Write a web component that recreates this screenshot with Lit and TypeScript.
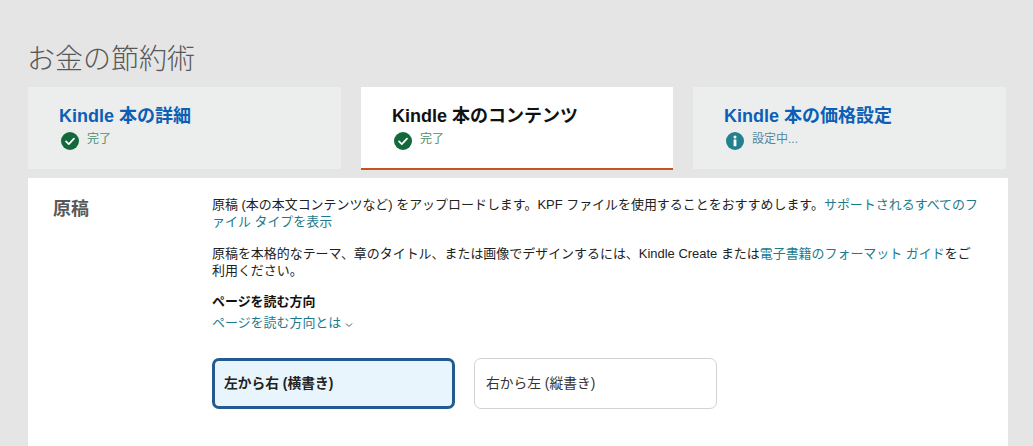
import { LitElement, html, css, svg } from "lit";
import { customElement } from "lit/decorators.js";

const check = svg`<circle cx="9" cy="9" r="9" fill="#14693c"/><path d="M5 9.4l2.8 2.7L13 6.6" fill="none" stroke="#fff" stroke-width="1.7" stroke-linecap="round" stroke-linejoin="round"/>`;
const info = svg`<circle cx="9" cy="9" r="9" fill="#23808f"/><circle cx="9" cy="4.9" r="1.5" fill="#fff"/><rect x="7.6" y="7.4" width="2.8" height="6.8" rx=".4" fill="#fff"/>`;

@customElement("app-root")
export class AppRoot extends LitElement {
  static styles = css`
    :host {
      display: block;
      width: 1033px;
      height: 446px;
      overflow: hidden;
      background: #e5e5e5;
      font-family: "Liberation Sans", "Noto Sans CJK JP", sans-serif;
      color: #111;
    }
    .page { padding: 40px 25px 0 28px; }
    h1 {
      margin: 0 0 0 -1px;
      font-size: 28px;
      line-height: 39px;
      height: 47px;
      font-weight: 300;
      color: #565959;
    }
    .tabs { display: flex; gap: 20px; height: 83px; }
    .tab {
      flex: none;
      width: 313px;
      height: 82px;
      box-sizing: border-box;
      background: #eceeee;
      padding: 17px 0 0 31px;
    }
    .tab.mid { width: 312px; height: 83px; background: #fff; border-bottom: 2px solid #c7511f; }
    .tab-title { font-size: 18px; line-height: 24px; font-weight: 700; color: #0c5fb5; }
    .mid .tab-title { color: #111; }
    .status { display: flex; align-items: center; gap: 8px; margin: 4px 0 0 2px; font-size: 12px; line-height: 18px; color: #4c8f6d; }
    .status.info { color: #55879f; }
    .status span { position: relative; top: -2px; }
    .status svg { width: 18px; height: 18px; flex: none; }
    .panel {
      margin-top: 8px;
      width: 980px;
      height: 268px;
      background: #fff;
      display: flex;
      box-sizing: border-box;
      padding: 18px 0 0 25px;
    }
    .label { width: 159px; flex: none; font-size: 18px; line-height: 26px; font-weight: 700; color: #565959; }
    .body { width: 768px; font-size: 12.96px; line-height: 17px; color: #222; line-break: loose; }
    p { margin: 0 0 14px; }
    p:first-child { margin-bottom: 15px; }
    a { color: #1d7a8c; text-decoration: none; }
    .sub { font-weight: 700; color: #111; line-height: 17px; }
    .more { display: flex; align-items: center; gap: 4px; line-height: 18px; margin-top: 4px; }
    .more svg { width: 8px; height: 6px; margin-top: 3px; }
    .choices { display: flex; gap: 19px; margin-top: 26px; }
    .choice {
      width: 243px;
      height: 51px;
      box-sizing: border-box;
      border: 1px solid #d0d2d4;
      border-radius: 7px;
      display: flex;
      align-items: center;
      padding-left: 11px;
      font-size: 13.75px;
      color: #333;
    }
    .choice.on {
      border: 3px solid #235a90;
      background: #e9f5fc;
      padding-left: 9px;
      font-weight: 700;
      color: #222;
    }
  `;

  render() {
    return html`<div class="page">
      <h1>お金の節約術</h1>
      <div class="tabs">
        <div class="tab">
          <div class="tab-title">Kindle 本の詳細</div>
          <div class="status"><svg viewBox="0 0 18 18">${check}</svg><span>完了</span></div>
        </div>
        <div class="tab mid">
          <div class="tab-title">Kindle 本のコンテンツ</div>
          <div class="status"><svg viewBox="0 0 18 18">${check}</svg><span>完了</span></div>
        </div>
        <div class="tab">
          <div class="tab-title">Kindle 本の価格設定</div>
          <div class="status info"><svg viewBox="0 0 18 18">${info}</svg><span>設定中...</span></div>
        </div>
      </div>
      <div class="panel">
        <div class="label">原稿</div>
        <div class="body">
          <p>原稿 (本の本文コンテンツなど) をアップロードします。KPF ファイルを使用することをおすすめします。<a>サポートされるすべてのファイル タイプを表示</a></p>
          <p>原稿を本格的なテーマ、章のタイトル、または画像でデザインするには、Kindle Create または<a>電子書籍のフォーマット ガイド</a>をご利用ください。</p>
          <div class="sub">ページを読む方向</div>
          <div class="more"><a>ページを読む方向とは</a><svg viewBox="0 0 8 6"><path d="M1 1.5l3 3 3-3" fill="none" stroke="#555" stroke-width="1"/></svg></div>
          <div class="choices">
            <div class="choice on">左から右 (横書き)</div>
            <div class="choice">右から左 (縦書き)</div>
          </div>
        </div>
      </div>
    </div>`;
  }
}
